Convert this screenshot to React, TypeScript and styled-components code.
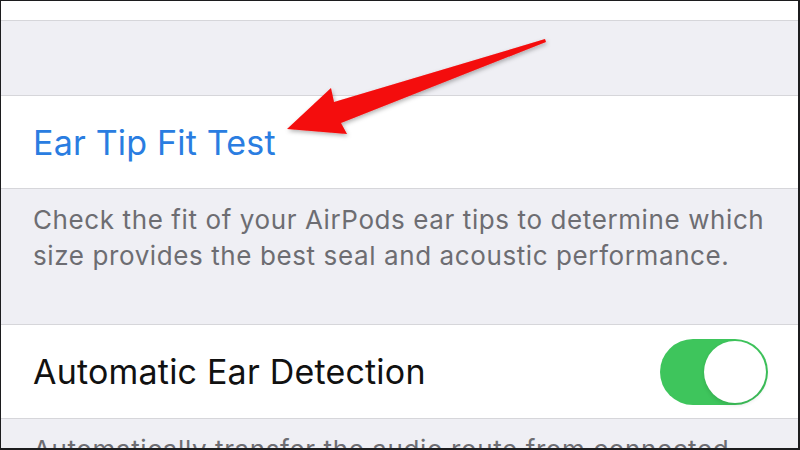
import React from "react";
import styled, { createGlobalStyle } from "styled-components";

const Global = createGlobalStyle`
  html, body { margin: 0; padding: 0; background: #ffffff; }
  body { font-family: Inter, "Open Sans", "Liberation Sans", sans-serif; }
`;

const Frame = styled.div`
  position: relative;
  width: 800px;
  height: 450px;
  box-sizing: border-box;
  border-style: solid;
  border-color: #1c1c1e;
  border-width: 1px 2px 2px 1px;
  overflow: hidden;
  display: flex;
  flex-direction: column;
  background: #efeff4;
`;

const Cell = styled.div<{ $h: number }>`
  flex: none;
  height: ${(p) => p.$h}px;
  background: #ffffff;
  border-bottom: 1px solid #d6d6da;
  display: flex;
  align-items: center;
  justify-content: space-between;
  padding: 0 30px 0 32px;
`;

const Spacer = styled.div<{ $h: number; $white?: boolean }>`
  flex: none;
  height: ${(p) => p.$h}px;
  background: ${(p) => (p.$white ? "#ffffff" : "#efeff4")};
  border-bottom: 1px solid #d6d6da;
`;

const Footer = styled.div<{ $h?: number }>`
  flex: ${(p) => (p.$h ? "none" : "1")};
  height: ${(p) => (p.$h ? `${p.$h}px` : "auto")};
  background: #efeff4;
  border-bottom: ${(p) => (p.$h ? "1px solid #d6d6da" : "none")};
  box-sizing: border-box;
  padding: 13px 24px 0 32px;
  color: #6d6d72;
  font-size: 26px;
  line-height: 36px;
  letter-spacing: 0.6px;
`;

const Label = styled.span<{ $blue?: boolean }>`
  font-size: 34px;
  letter-spacing: 0.2px;
  color: ${(p) => (p.$blue ? "#2a7de1" : "#111111")};
`;

const Toggle = styled.div`
  width: 108px;
  height: 66px;
  border-radius: 33px;
  background: #3ec55c;
  box-sizing: border-box;
  padding: 2px;
  display: flex;
  justify-content: flex-end;
  align-items: center;
`;

const Knob = styled.div`
  width: 62px;
  height: 62px;
  border-radius: 50%;
  background: #ffffff;
  box-shadow: 0 2px 4px rgba(0, 0, 0, 0.12);
`;

const ArrowSvg = styled.svg`
  position: absolute;
  left: 0;
  top: 0;
  pointer-events: none;
`;

export default function App() {
  return (
    <>
      <Global />
      <Frame>
        <Spacer $h={19} $white />
        <Spacer $h={74} />
        <Cell $h={92}>
          <Label $blue>Ear Tip Fit Test</Label>
        </Cell>
        <Footer $h={136}>
          Check the fit of your AirPods ear tips to determine which size provides the best seal and acoustic performance.
        </Footer>
        <Cell $h={93}>
          <Label>Automatic Ear Detection</Label>
          <Toggle>
            <Knob />
          </Toggle>
        </Cell>
        <Footer>Automatically transfer the audio route from connected devices to the AirPods when they are placed in your ears.</Footer>
        <ArrowSvg width="800" height="450" viewBox="0 0 800 450">
          <defs>
            <filter id="sh" x="-10%" y="-10%" width="120%" height="130%">
              <feDropShadow dx="1" dy="2" stdDeviation="2" floodColor="#000" floodOpacity="0.3" />
            </filter>
          </defs>
          <polygon
            points="286,128 330,87 333,101 544,38 545,41 340,122 346,133"
            fill="#f40a0a"
            filter="url(#sh)"
          />
        </ArrowSvg>
      </Frame>
    </>
  );
}
